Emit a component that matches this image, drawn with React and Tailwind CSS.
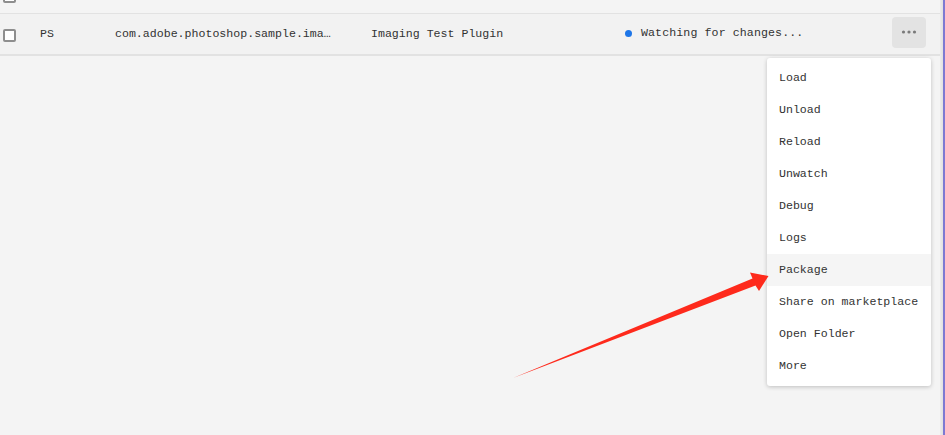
import { useState } from "react";

const mono = { fontFamily: '"Liberation Mono", "DejaVu Sans Mono", monospace' };

const items = [
  "Load",
  "Unload",
  "Reload",
  "Unwatch",
  "Debug",
  "Logs",
  "Package",
  "Share on marketplace",
  "Open Folder",
  "More",
];

function Checkbox({ className = "" }) {
  return (
    <div
      className={`w-[13px] h-[13px] border-2 border-[#8e8e8e] rounded-[2px] bg-white shrink-0 ${className}`}
    />
  );
}

export default function App() {
  const [hover] = useState("Package");

  return (
    <div
      className="relative w-[945px] h-[435px] bg-[#f4f4f4] overflow-hidden flex text-[11.6px] text-[#333]"
      style={mono}
    >
      <div className="flex-1 flex flex-col">
        {/* header remnant */}
        <div className="h-[14px] overflow-hidden border-b border-[#e2e2e2] pl-[3px]">
          <Checkbox className="-mt-[10px]" />
        </div>

        {/* plugin row */}
        <div className="h-[42px] flex items-center border-b-2 border-[#e2e2e2] bg-[#f2f2f2] pr-[14px]">
          <Checkbox className="ml-[3px] mt-[2px]" />
          <span className="ml-[24px] w-[75px]">PS</span>
          <span className="w-[256px] whitespace-nowrap">com.adobe.photoshop.sample.ima…</span>
          <span className="w-[253px] whitespace-nowrap">Imaging Test Plugin</span>
          <span className="w-[7px] h-[7px] rounded-full bg-[#1e76e8] ml-[1px] -mt-[2px]" />
          <span className="ml-[9px] -mt-[2px] whitespace-nowrap tracking-[0.1px]">Watching for changes...</span>
          <button className="ml-auto -mt-[4px] w-[34px] h-[31px] rounded-[4px] bg-[#e3e3e3] flex items-center justify-center">
            <svg width="16" height="4" viewBox="0 0 16 4">
              <circle cx="2.5" cy="2" r="1.6" fill="#7a7a7a" />
              <circle cx="8" cy="2" r="1.6" fill="#7a7a7a" />
              <circle cx="13.5" cy="2" r="1.6" fill="#7a7a7a" />
            </svg>
          </button>
        </div>
      </div>

      {/* right edge */}
      <div className="w-[3px] bg-gradient-to-r from-[#ececec] to-[#e0e0e0]" />
      <div className="w-[2px] bg-[#7d79d2]" />

      {/* dropdown menu */}
      <div className="absolute left-[767px] top-[58px] w-[164px] py-[4px] bg-white rounded-[3px] shadow-[0_1px_4px_rgba(0,0,0,0.22)]">
        {items.map((it) => (
          <div
            key={it}
            className={`h-[32px] flex items-center pl-[12px] whitespace-nowrap ${
              it === hover ? "bg-[#f5f5f5]" : ""
            }`}
          >
            {it}
          </div>
        ))}
      </div>

      {/* annotation arrow */}
      <svg
        className="absolute inset-0 pointer-events-none"
        width="945"
        height="435"
        viewBox="0 0 945 435"
      >
        <polygon
          points="513,378 752.5,278.5 750,272.5 768.5,276 759,291 755.5,285.5"
          fill="#fe2a1c"
        />
      </svg>
    </div>
  );
}
